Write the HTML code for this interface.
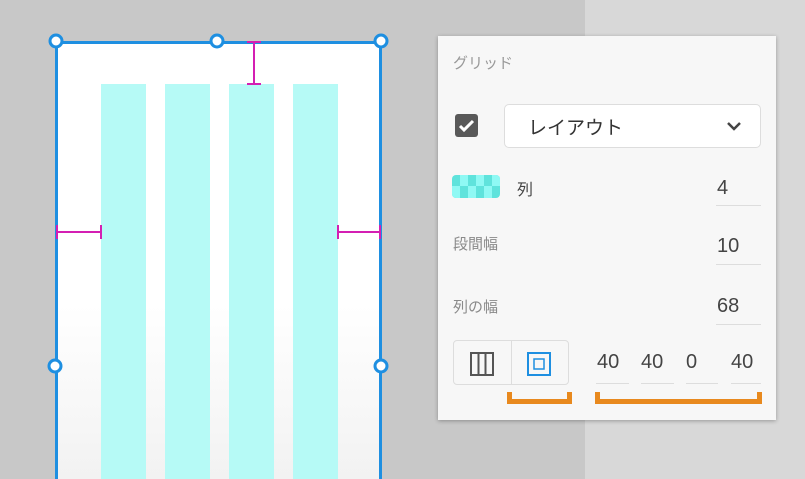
<!DOCTYPE html>
<html><head><meta charset="utf-8"><style>
*{margin:0;padding:0;box-sizing:border-box}
html,body{width:805px;height:479px;overflow:hidden}
body{position:relative;background:#c8c8c8;font-family:"Liberation Sans","Noto Sans CJK JP",sans-serif}
.a{position:absolute}
.lbl{color:#8a8a8a;font-size:15px}
.num{color:#444;font-size:20px}
.ul{height:1px;background:#ddd}
</style></head><body>
<div class="a" style="left:585px;top:0;width:220px;height:479px;background:#d8d8d8"></div>
<div class="a" style="left:55px;top:41px;width:327px;height:438px;background:linear-gradient(#fff 60%,#f2f2f2);border:3px solid #1e8fe1;border-bottom:none"></div>
<div class="a" style="left:101px;top:84px;width:45px;height:395px;background:#b6faf6"></div>
<div class="a" style="left:165px;top:84px;width:45px;height:395px;background:#b6faf6"></div>
<div class="a" style="left:229px;top:84px;width:45px;height:395px;background:#b6faf6"></div>
<div class="a" style="left:293px;top:84px;width:45px;height:395px;background:#b6faf6"></div>
<svg class="a" style="left:0;top:0" width="440" height="479">
<g stroke="#d41fb3" stroke-width="2" fill="none">
<path d="M254 42V84M247 42H261M247 84H261"/>
<path d="M57 232H101M57 225V239M101 225V239"/>
<path d="M338 232H380M338 225V239M380 225V239"/>
</g>
<g fill="#fff" stroke="#1e8fe1" stroke-width="3">
<circle cx="56" cy="41" r="6"/><circle cx="217" cy="41" r="6"/><circle cx="381" cy="41" r="6"/>
<circle cx="55" cy="366" r="6"/><circle cx="381" cy="366" r="6"/>
</g>
</svg>
<div class="a" style="left:438px;top:36px;width:338px;height:384px;background:#f7f7f7;box-shadow:0 1px 4px rgba(0,0,0,.3)"></div>
<div class="a lbl" style="left:453px;top:52px;font-size:15px;color:#999">グリッド</div>
<div class="a" style="left:455px;top:114px;width:23px;height:23px;background:#595959;border-radius:3px"></div>
<svg class="a" style="left:455px;top:114px" width="23" height="23"><path d="M5 12l4 4 9-9" stroke="#fff" stroke-width="3" fill="none"/></svg>
<div class="a" style="left:504px;top:104px;width:257px;height:44px;background:#fff;border:1px solid #ddd;border-radius:5px"></div>
<div class="a" style="left:528px;top:113px;font-size:19px;color:#333">レイアウト</div>
<svg class="a" style="left:726px;top:120px" width="16" height="12"><path d="M2 3l6 6 6-6" stroke="#444" stroke-width="2.5" fill="none"/></svg>
<svg class="a" style="left:452px;top:175px" width="48" height="23"><defs><clipPath id="c"><rect width="48" height="23" rx="4"/></clipPath></defs><g clip-path="url(#c)"><rect width="48" height="23" fill="#5fe3dc"/><g fill="#8ff9f4"><rect x="8" y="0" width="8" height="11"/><rect x="24" y="0" width="8" height="11"/><rect x="40" y="0" width="8" height="11"/><rect x="0" y="11" width="8" height="12"/><rect x="16" y="11" width="8" height="12"/><rect x="32" y="11" width="8" height="12"/></g></g></svg>
<div class="a" style="left:517px;top:176px;font-size:16px;color:#444">列</div>
<div class="a num" style="left:717px;top:177px">4</div>
<div class="a ul" style="left:716px;top:205px;width:45px"></div>
<div class="a lbl" style="left:453px;top:233px">段間幅</div>
<div class="a num" style="left:717px;top:235px">10</div>
<div class="a ul" style="left:716px;top:264px;width:45px"></div>
<div class="a lbl" style="left:453px;top:296px">列の幅</div>
<div class="a num" style="left:717px;top:295px">68</div>
<div class="a ul" style="left:716px;top:324px;width:45px"></div>
<div class="a" style="left:453px;top:340px;width:116px;height:45px;border:1px solid #ddd;border-radius:4px;background:#f7f7f7"></div>
<div class="a" style="left:511px;top:341px;width:1px;height:43px;background:#ddd"></div>
<svg class="a" style="left:470px;top:352px" width="25" height="25"><rect x="1" y="1" width="22" height="22" fill="none" stroke="#555" stroke-width="2"/><path d="M8.5 1V23M15.5 1V23" stroke="#555" stroke-width="2"/></svg>
<svg class="a" style="left:527px;top:352px" width="25" height="25"><rect x="1" y="1" width="22" height="22" fill="none" stroke="#1e8fe1" stroke-width="2"/><rect x="7" y="7" width="10" height="10" fill="none" stroke="#1e8fe1" stroke-width="1.5"/></svg>
<div class="a num" style="left:597px;top:351px">40</div>
<div class="a num" style="left:641px;top:351px">40</div>
<div class="a num" style="left:686px;top:351px">0</div>
<div class="a num" style="left:731px;top:351px">40</div>
<div class="a ul" style="left:596px;top:383px;width:33px"></div>
<div class="a ul" style="left:641px;top:383px;width:33px"></div>
<div class="a ul" style="left:686px;top:383px;width:32px"></div>
<div class="a ul" style="left:731px;top:383px;width:30px"></div>
<svg class="a" style="left:500px;top:390px" width="270" height="16"><g fill="#e8891e"><rect x="7" y="9" width="65" height="5"/><rect x="7" y="2" width="5" height="12"/><rect x="67" y="2" width="5" height="12"/><rect x="95" y="9" width="167" height="5"/><rect x="95" y="2" width="5" height="12"/><rect x="257" y="2" width="5" height="12"/></g></svg>
</body></html>
